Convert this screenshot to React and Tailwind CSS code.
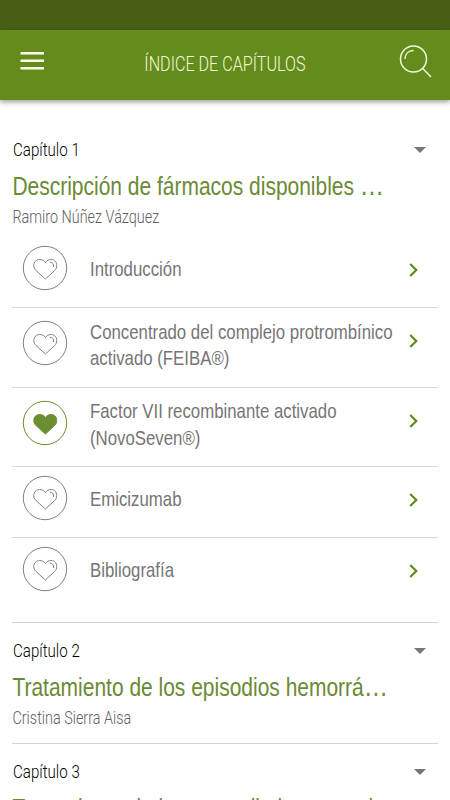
const chapters = [
  {
    label: "Capítulo 1",
    title: "Descripción de fármacos disponibles ",
    author: "Ramiro Núñez Vázquez",
    sections: [
      { lines: ["Introducción"] },
      { lines: ["Concentrado del complejo protrombínico", "activado (FEIBA®)"] },
      { lines: ["Factor VII recombinante activado", "(NovoSeven®)"], favorite: true },
      { lines: ["Emicizumab"] },
      { lines: ["Bibliografía"] },
    ],
  },
  {
    label: "Capítulo 2",
    title: "Tratamiento de los episodios hemorrá",
    author: "Cristina Sierra Aisa",
    sections: [],
  },
  {
    label: "Capítulo 3",
    title: "Tratamiento de los procedimientos en l",
    author: "",
    sections: [],
  },
];

function FavoriteButton({ active }) {
  const color = active ? "#6b8e30" : "#808080";
  return (
    <svg className="size-[46px] shrink-0" viewBox="0 0 46 46" fill="none" stroke={color} strokeWidth="1">
      <circle cx="23" cy="23" r="21.7" />
      <path
        d="M23.4 34L14.2 25.700C12.600 24.200 11.800 22.500 11.800 20.500C11.800 17 14.300 14.500 17.600 14.500C20.200 14.500 22.400 15.700 23.400 17.700C24.400 15.700 26.600 14.500 29.200 14.500C32.500 14.500 34.700 17 34.700 20.500C34.700 22.500 34 24.200 32.500 25.700Z"
        fill={active ? color : "none"}
      />
      {!active && <path d="M27.800 17.200C30.500 17.200 31.900 19 31.600 22" />}
    </svg>
  );
}

function Section({ lines, favorite }) {
  const single = lines.length === 1;
  return (
    <li
      className={`flex items-start border-b border-[#d9d9d9] pl-[10px] last:border-transparent ${
        single ? "h-[71px] pt-2" : "h-[79.500px] pt-3"
      }`}
    >
      <FavoriteButton active={favorite} />
      <div className={`flex w-0 flex-1 flex-col pl-[22px] ${single ? "pt-[11px]" : "-mt-[1.500px]"}`}>
        {lines.map((line) => (
          <span key={line} className="w-max origin-left scale-x-[0.8] text-[21px] leading-[26.500px] text-[#757575]">
            {line}
          </span>
        ))}
      </div>
      <svg
        className={`mr-5 h-4 w-[9px] shrink-0 ${single ? "mt-[17px]" : "mt-[13px]"}`}
        viewBox="0 0 9 16"
        fill="none"
        stroke="#5f8a17"
        strokeWidth="2.200"
      >
        <path d="M1.200 2L7.300 8L1.200 14" />
      </svg>
    </li>
  );
}

function Chapter({ label, title, author, sections }) {
  return (
    <section className="border-b border-[#d4d4d4] pt-4 pb-3">
      <div className="flex h-6 items-center justify-between pr-3 pl-[0.500px]">
        <h2 className="origin-left scale-x-[0.84] pb-[1px] font-['Roboto'] text-[18px] font-light text-black">{label}</h2>
        <svg className="h-[6px] w-3" viewBox="0 0 12 6" fill="#777">
          <path d="M0 0H12L6 6Z" />
        </svg>
      </div>
      <h3 className="mt-[9px] h-8 w-max origin-left scale-x-[0.839] pl-[0.500px] text-[25px] leading-[31px] whitespace-pre text-[#6b8a35]">
        {title}
        <span className="text-[29px] leading-none">…</span>
      </h3>
      <p className="mt-[1px] h-[26px] w-max origin-left scale-x-[0.8] pl-[0.500px] font-['Roboto'] text-[18px] leading-[25px] font-light text-[#606060]">
        {author}
      </p>
      {sections.length > 0 && (
        <ul className="pt-[7.200px] pb-[0.800px]">
          {sections.map((section) => (
            <Section key={section.lines[0]} {...section} />
          ))}
        </ul>
      )}
    </section>
  );
}

export default function App() {
  return (
    <div className="flex h-[800px] w-[450px] flex-col overflow-hidden bg-white font-['Liberation_Sans',sans-serif]">
      <div className="h-[30px] shrink-0 bg-[#465f15]" />
      <header className="z-10 flex h-[70px] shrink-0 items-center justify-between bg-[#648c1c] pr-[17px] pl-5 shadow-[0_2px_5px_rgba(0,0,0,0.400)]">
        <svg className="mr-[7px] mb-[9px] h-[18px] w-6" viewBox="0 0 24 18" fill="#fbffe8">
          <rect x="0.500" y="0" width="23.500" height="2.600" rx="0.500" />
          <rect x="0.500" y="7.500" width="23.500" height="2.600" rx="0.500" />
          <rect x="0.500" y="15" width="23.500" height="2.600" rx="0.500" />
        </svg>
        <div className="flex w-[170px] justify-center pb-[1px]">
          <h1 className="w-max shrink-0 scale-x-[0.768] font-['Roboto'] text-[21px] font-light text-[#f1fad6]">ÍNDICE DE CAPÍTULOS</h1>
        </div>
        <svg className="mb-2 size-[34px]" viewBox="0 0 34 34" fill="none" stroke="#f1fad6" strokeWidth="1.500">
          <circle cx="14.500" cy="15" r="13" />
          <path d="M6 15C6 10 9.500 6.700 14.500 6.500M23.700 24.500L32 33" />
        </svg>
      </header>
      <main className="flex-1 overflow-hidden px-3 pt-[22px]">
        {chapters.map((chapter) => (
          <Chapter key={chapter.label} {...chapter} />
        ))}
      </main>
    </div>
  );
}
